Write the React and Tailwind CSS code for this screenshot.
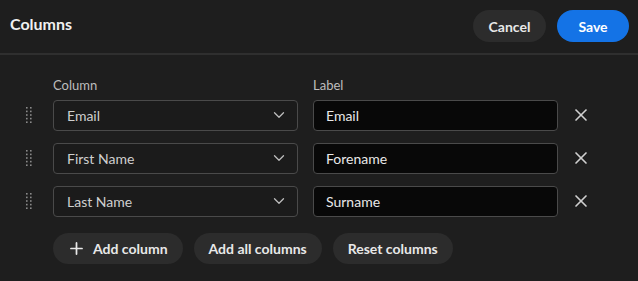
import { X, Plus, ChevronDown } from "lucide-react";

const rows = [
  { column: "Email", label: "Email" },
  { column: "First Name", label: "Forename" },
  { column: "Last Name", label: "Surname" },
];

function DragHandle() {
  return (
    <svg width="6" height="17" viewBox="0 0 6 17" className="text-[#8a8a8a]">
      {[0, 1, 2, 3, 4].map((r) =>
        [0, 4].map((c) => (
          <rect key={`${r}-${c}`} x={c} y={r * 3.6} width="1.6" height="1.6" fill="currentColor" />
        ))
      )}
    </svg>
  );
}

export default function App() {
  return (
    <div
      className="w-[638px] h-[281px] bg-[#1e1e1e] text-[#e8e8e8] overflow-hidden"
      style={{ fontFamily: "Lato, 'Noto Sans', sans-serif" }}
    >
      <div className="h-[55px] flex items-center justify-between pl-[10px] pr-[9px] border-b-2 border-[#2f2f2f]">
        <h2 className="text-[16px] font-bold text-[#f0f0f0] mb-[5px]">Columns</h2>
        <div className="flex items-center gap-[11px] pb-[1px]">
          <button className="h-[32px] w-[73px] rounded-full bg-[#2c2c2c] text-[14px] font-bold text-[#e8e8e8]">
            Cancel
          </button>
          <button className="h-[32px] w-[72px] rounded-full bg-[#1473e6] text-[14px] font-bold text-white">
            Save
          </button>
        </div>
      </div>

      <div className="pt-[21px] pl-[24px]">
        <div className="flex text-[13px] text-[#bdbdbd] pl-[29px] mb-[4px]">
          <span className="w-[260px]">Column</span>
          <span>Label</span>
        </div>

        <div className="flex flex-col gap-[12px]">
          {rows.map((row) => (
            <div key={row.column} className="flex items-center">
              <div className="w-[29px] flex pl-[2px]">
                <DragHandle />
              </div>
              <div className="w-[245px] h-[31px] flex items-center justify-between pl-[13px] pr-[9px] rounded-[4px] border border-[#4a4a4a] bg-[#1b1b1b] text-[14px] text-[#cfcfcf]">
                <span>{row.column}</span>
                <ChevronDown size={18} strokeWidth={1.7} className="text-[#bdbdbd]" />
              </div>
              <div className="ml-[15px] w-[245px] h-[31px] flex items-center pl-[12px] rounded-[4px] border border-[#4a4a4a] bg-[#080808] text-[14px] text-[#e8e8e8]">
                {row.label}
              </div>
              <button className="ml-[13px] flex items-center justify-center text-[#d0d0d0]">
                <X size={20} strokeWidth={2} />
              </button>
            </div>
          ))}
        </div>

        <div className="flex gap-[11px] pl-[29px] mt-[16px]">
          <button className="h-[31px] flex items-center gap-[7px] pl-[14px] pr-[15px] rounded-full bg-[#2c2c2c] text-[14px] font-bold text-[#e8e8e8]">
            <Plus size={19} strokeWidth={2.2} />
            Add column
          </button>
          <button className="h-[31px] px-[15px] rounded-full bg-[#2c2c2c] text-[14px] font-bold text-[#e8e8e8]">
            Add all columns
          </button>
          <button className="h-[31px] px-[15px] rounded-full bg-[#2c2c2c] text-[14px] font-bold text-[#e8e8e8]">
            Reset columns
          </button>
        </div>
      </div>
    </div>
  );
}
